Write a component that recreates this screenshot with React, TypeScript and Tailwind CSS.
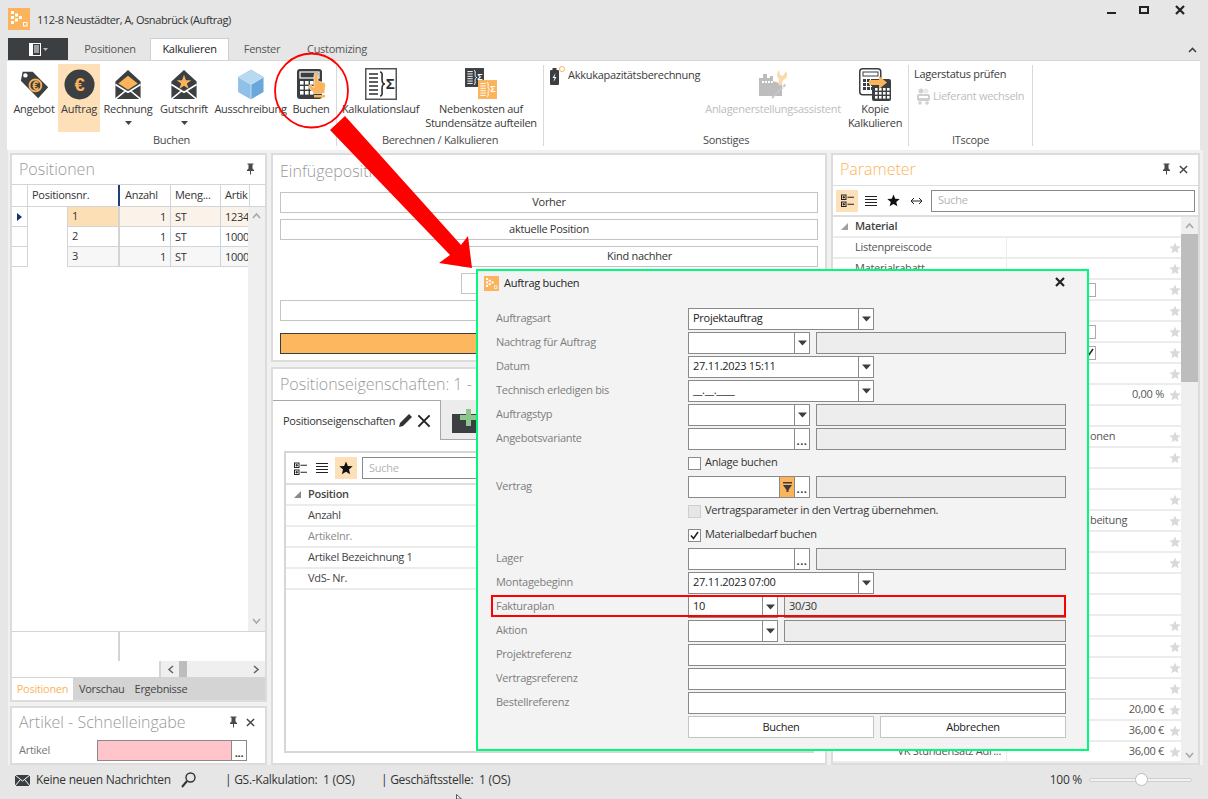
import React from "react";

const Star = ({ c = "#d9d9d9", s = 12 }: { c?: string; s?: number }) => (
  <svg width={s} height={s} viewBox="0 0 24 24" className="shrink-0">
    <polygon fill={c} points="12,1 15.2,8.6 23.4,9.2 17.1,14.6 19.1,22.6 12,18.3 4.9,22.6 6.9,14.6 0.6,9.2 8.8,8.6" />
  </svg>
);
const Caret = () => (
  <svg width="9" height="6" viewBox="0 0 9 6"><polygon points="0,0.5 9,0.5 4.5,5.5" fill="#3c3c3c" /></svg>
);
const Pin = () => (
  <svg width="9" height="12" viewBox="0 0 9 12" className="shrink-0">
    <path d="M1.5 0.5h6v1h-1v4l1.5 1.5v1h-3v3.5h-1v-3.5h-3v-1l1.5-1.5v-4h-1z" fill="#4a4a4a" />
  </svg>
);
const Cross = ({ s = 9, w = 1.6, c = "#444" }: { s?: number; w?: number; c?: string }) => (
  <svg width={s} height={s} viewBox="0 0 10 10" className="shrink-0">
    <path d="M1 1l8 8M9 1l-8 8" stroke={c} strokeWidth={w} fill="none" />
  </svg>
);
const TreeIcon = () => (
  <svg width="13" height="13" viewBox="0 0 13 13">
    <rect x="0.5" y="1" width="4.500" height="4.500" fill="none" stroke="#222" />
    <rect x="0.5" y="8" width="4.500" height="4.500" fill="none" stroke="#222" />
    <path d="M1.500 3.250h2.500M2.750 2v2.500M1.500 10.250h2.500M2.750 9v2.500M6.500 3.250h6.500M6.500 10.250h6.500" stroke="#222" />
  </svg>
);
const LinesIcon = () => (
  <svg width="12" height="12" viewBox="0 0 12 12"><path d="M0 1.5h12M0 4.5h12M0 7.5h12M0 10.5h12" stroke="#222" /></svg>
);
const ScrollChevron = ({ d }: { d: "u" | "d" | "l" | "r" }) => {
  const p = { u: "M1 6l3.500-4 3.500 4", d: "M1 2l3.500 4 3.500-4", l: "M6 1l-4 3.500 4 3.500", r: "M2 1l4 3.500-4 3.500" }[d];
  const color = d === "u" || d === "d" ? "#a8a8a8" : "#666";
  return <svg width="9" height="9" viewBox="0 0 9 9"><path d={p} fill="none" stroke={color} strokeWidth="1.600" /></svg>;
};

const LogoMark = ({ s }: { s: number }) => (
  <svg width={s} height={s} viewBox="0 0 22 22" className="shrink-0">
    <rect width="22" height="22" fill="#fbb45c" />
    <g fill="#fff">
      <rect x="3" y="3" width="3" height="3" /><rect x="3" y="8" width="3" height="3" /><rect x="3" y="13" width="3" height="3" />
      <rect x="7" y="5.5" width="3" height="3" /><rect x="7" y="10.5" width="3" height="3" /><rect x="11" y="8" width="3" height="3" />
    </g>
    <rect x="15.5" y="14.5" width="3.5" height="3.5" fill="none" stroke="#fff" />
  </svg>
);
const DARK = "#3b3f41";
const ORANGE = "#fbb45c";

const IconAngebot = () => (
  <svg width="31" height="31" viewBox="0 0 34 34">
    <path d="M4 3h11l17 17-11 12L2 13z" fill={DARK} />
    <circle cx="7" cy="7" r="2.400" fill="#fff" />
    <circle cx="18" cy="18" r="6.500" fill="none" stroke={ORANGE} strokeWidth="2" />
    <text x="18" y="22.500" textAnchor="middle" fontSize="13" fontWeight="700" fill={ORANGE} fontFamily="Liberation Sans, sans-serif">€</text>
  </svg>
);
const IconAuftrag = () => (
  <svg width="31" height="31" viewBox="0 0 32 32">
    <circle cx="16" cy="16" r="15.500" fill={DARK} />
    <text x="16" y="22.500" textAnchor="middle" fontSize="19" fontWeight="700" fill={ORANGE} fontFamily="Liberation Sans, sans-serif">€</text>
  </svg>
);
const Envelope = ({ star }: { star?: boolean }) => (
  <svg width="28" height="31" viewBox="0 0 28 32">
    <path d="M14 1L27 13v18H1V13z" fill={DARK} />
    <path d="M1 16l13 8 13-8M1 31l11-9M27 31l-11-9" fill="none" stroke="#fff" strokeWidth="1.600" />
    {star ? (
      <polygon fill={ORANGE} points="14,6 16,11.5 21.5,11.5 17,15 18.7,20.5 14,17.3 9.3,20.5 11,15 6.5,11.5 12,11.5" />
    ) : (
      <path d="M14 7l10 8-10 6.500L4 15z" fill={ORANGE} />
    )}
  </svg>
);
const IconCube = () => (
  <svg width="26" height="31" viewBox="0 0 28 33">
    <path d="M14 0.500L27.500 8.500v16L14 32.500.5 24.500v-16z" fill="#6aa7da" />
    <path d="M14 0.500L27.500 8.500 14 16.500.5 8.500z" fill="#b9d9f1" />
    <path d="M14 16.500v16L.5 24.500v-16z" fill="#8fc0e7" />
    <path d="M14 16.500L27.500 8.500M14 16.500L.5 8.500M14 16.500v16" stroke="#d8ebf8" strokeWidth="0.800" />
  </svg>
);
const IconBuchen = () => (
  <svg width="29" height="32" viewBox="0 0 29 32">
    <rect x="0" y="1" width="25" height="30" rx="3" fill={DARK} />
    <rect x="3" y="4" width="19" height="6" fill="none" stroke="#fff" strokeWidth="1.200" />
    <g fill="#fff">
      {[13, 18, 23].map((y) => [3, 8, 13].map((x) => <rect key={`${x}${y}`} x={x} y={y} width="3.600" height="3.600" />))}
    </g>
    <path d="M17 7a2 2 0 014 0v6l5.500 1.500c1 .3 2 1 2 2l-1 9H17l-6-7 2-2 4 3z" fill={ORANGE} stroke="#fff" strokeWidth="0.600" />
    <rect x="17" y="27" width="11" height="2.500" fill={ORANGE} />
  </svg>
);
const SigmaBox = ({ s, fill, fg, border }: { s: number; fill: string; fg: string; border?: string }) => (
  <svg width={s} height={s} viewBox="0 0 32 32" className="shrink-0">
    <rect x="0.750" y="0.750" width="30.500" height="30.500" fill={fill} stroke={border ?? fill} strokeWidth="1.500" />
    <path d="M4 6h9M4 10h9M4 14h9M4 18h9M4 22h9M4 26h9" stroke={fg} strokeWidth="1.600" />
    <path d="M15 4c3 0 2 4 2 7s1 5 3 5c-2 0-3 2-3 5s1 7-2 7" fill="none" stroke={fg} strokeWidth="1.600" />
    <text x="25" y="21" textAnchor="middle" fontSize="15" fontWeight="700" fill={fg} fontFamily="Liberation Sans, sans-serif">Σ</text>
  </svg>
);
const IconNebenkosten = () => (
  <span className="relative block w-[32px] h-[32px]">
    <span className="absolute left-0 top-0"><SigmaBox s={19} fill={DARK} fg="#fff" /></span>
    <span className="absolute left-[13px] top-[12px]"><SigmaBox s={19} fill={ORANGE} fg="#fff" /></span>
  </span>
);
const IconAnlage = () => (
  <svg width="30" height="32" viewBox="0 0 30 32">
    <path d="M1 10h4V6h4v4h3V8h3v5l9 3v12H1z" fill="#bdbdbd" />
    <path d="M4 14h12" stroke="#fff" strokeWidth="2" strokeDasharray="2 1" />
    <path d="M21 2l1 5 3 1 3-5c2 4 1 8-3 9l-2 6-3-2 1-5c-3-2-2-7 0-9z" fill="#fad9ab" />
    <path d="M14 30l14-14" stroke="#c9c9c9" strokeWidth="2" strokeDasharray="3 1" />
  </svg>
);
const IconKopie = () => (
  <svg width="32" height="33" viewBox="0 0 32 33">
    <rect x="0.750" y="0.750" width="21" height="26" rx="3" fill="#fff" stroke={DARK} strokeWidth="1.500" />
    <rect x="4" y="4" width="15" height="4" fill="none" stroke={DARK} />
    <g fill={DARK}>
      {[11, 15, 19].map((y) => [4, 8, 12].map((x) => <rect key={`${x}${y}`} x={x} y={y} width="3" height="3" />))}
    </g>
    <rect x="13" y="11" width="19" height="22" rx="2" fill={DARK} />
    <g fill="#fff">
      {[20, 24, 28].map((y) => [16, 20, 24, 28].map((x) => <rect key={`${x}${y}`} x={x} y={y} width="2.600" height="2.600" />))}
    </g>
    <path d="M10 12h10V8l8 6.500-8 6.500v-4H10z" fill={ORANGE} />
  </svg>
);
const IconBattery = () => (
  <svg width="16" height="19" viewBox="0 0 16 19" className="shrink-0">
    <rect x="1" y="4" width="9" height="15" rx="1" fill={DARK} />
    <rect x="3.500" y="2" width="4" height="2" fill={DARK} />
    <path d="M6.500 7L3.500 12h2L4.500 16l3-5h-2z" fill="#fff" />
    <circle cx="13" cy="3" r="2.500" fill="none" stroke={ORANGE} />
  </svg>
);
const IconLieferant = () => (
  <svg width="15" height="17" viewBox="0 0 15 17" className="shrink-0">
    <circle cx="5" cy="3" r="2.500" fill="#d0d0d0" /><circle cx="10" cy="3" r="2.500" fill="#e8e8e8" />
    <rect x="1" y="6" width="13" height="7" rx="2" fill="#cfcfcf" /><rect x="3" y="8" width="9" height="2" fill="#fff" />
    <circle cx="4" cy="15" r="1.800" fill="#d0d0d0" /><circle cx="11" cy="15" r="1.800" fill="#d0d0d0" />
  </svg>
);

const RibbonBtn = ({ w, label, icon, caret, active, muted }: { w: string; label: React.ReactNode; icon: React.ReactNode; caret?: boolean; active?: boolean; muted?: boolean }) => (
  <div className={`${w} h-[68px] shrink-0 flex flex-col items-center ${active ? "bg-[#fde0b8]" : ""}`}>
    <div className="h-[38px] w-full flex items-center justify-center pt-[2px]">{icon}</div>
    <div className={`text-center leading-[14px] whitespace-nowrap ${muted ? "text-[#bdbdbd]" : "text-[#3a3a3a]"}`}>{label}</div>
    {caret && <div className="mt-[5px] flex"><svg width="7" height="4" viewBox="0 0 7 4"><polygon points="0,0 7,0 3.500,4" fill="#444" /></svg></div>}
  </div>
);
const RibbonGroup = ({ w, label, children, pad }: { w: string; label: string; children: React.ReactNode; pad?: string }) => (
  <div className={`${w} shrink-0 flex`}>
    <div className="flex-1 min-w-0 flex flex-col">
      <div className={`h-[68px] shrink-0 mt-[3px] flex ${pad ?? ""}`}>{children}</div>
      <div className="h-[16px] shrink-0 flex items-center justify-center text-[#4a4a4a]">{label}</div>
    </div>
    <div className="w-px bg-[#d9d9d9] mt-[4px]" />
  </div>
);

const Panel = ({ className, children }: { className: string; children: React.ReactNode }) => (
  <div className={`bg-white border-2 border-[#dcdcdc] flex flex-col overflow-hidden ${className}`}>{children}</div>
);
const PanelTitle = ({ text, orange, h, controls }: { text: string; orange?: boolean; h: string; controls?: "pin" | "both" }) => (
  <div className={`${h} shrink-0 flex items-center pl-[7px] pr-[9px]`}>
    <span className={`text-[16px] font-light tracking-[0px] leading-none whitespace-nowrap flex-1 ${orange ? "text-[#fbb45c]" : "text-[#999]"}`}>{text}</span>
    {controls && <div className="flex items-center gap-[8px] mr-[1px]"><Pin />{controls === "both" && <Cross />}</div>}
  </div>
);

const Box = ({ w, grey, children, flex }: { w?: string; grey?: boolean; children?: React.ReactNode; flex?: boolean }) => (
  <div className={`${w ?? ""} ${flex ? "flex-1" : "shrink-0"} h-[22px] border border-[#8a8a8a] ${grey ? "bg-[#ededed]" : "bg-white"} flex items-center overflow-hidden`}>{children}</div>
);
const Combo = ({ w, text, dots, filter }: { w: string; text?: string; dots?: boolean; filter?: boolean }) => (
  <Box w={w}>
    <span className="flex-1 pl-[4px] pb-[1px] text-[#222] whitespace-nowrap">{text}</span>
    {filter && (
      <span className="w-[15px] h-full bg-[#fbb45c] border-l border-[#8a8a8a] flex items-center justify-center">
        <svg width="9" height="10" viewBox="0 0 9 10"><path d="M0 0h9v1.500H0zM0 3h9L5.500 8v2h-2V8z" fill="#3c3c3c" /></svg>
      </span>
    )}
    <span className="w-[15px] h-full border-l border-[#8a8a8a] flex items-center justify-center">
      {dots ? <span className="text-[#333] leading-none tracking-[0.5px] pt-[3px] font-bold">...</span> : <Caret />}
    </span>
  </Box>
);
const Row = ({ label, children }: { label?: string; children: React.ReactNode }) => (
  <div className="h-[22px] flex items-center">
    <span className="w-[192px] shrink-0 pb-[2px] text-[#7d7d7d] whitespace-nowrap">{label}</span>
    <div className="w-[378px] flex gap-[6px] items-center">{children}</div>
  </div>
);
const Check = ({ checked, disabled, label }: { checked?: boolean; disabled?: boolean; label: string }) => (
  <div className="flex items-center gap-[4px]">
    <span className={`w-[13px] h-[13px] border flex items-center justify-center ${disabled ? "bg-[#e6e6e6] border-[#cfcfcf]" : "bg-white border-[#8a8a8a]"}`}>
      {checked && <svg width="9" height="9" viewBox="0 0 9 9"><path d="M1 4.500l2.500 3L8 1" fill="none" stroke="#222" strokeWidth="1.500" /></svg>}
    </span>
    <span className="text-[#333] whitespace-nowrap pb-[2px]">{label}</span>
  </div>
);

const paramRows: { name?: string; star: boolean; value?: string; left?: string; check?: boolean; checked?: boolean; nameRight?: boolean }[] = [
  { name: "Listenpreiscode", star: true },
  { name: "Materialrabatt", star: true },
  { star: true, check: true },
  { star: true },
  { star: true, check: true },
  { star: true, check: true, checked: true },
  { star: true },
  { star: true, value: "0,00 %" },
  { star: false },
  { star: true, left: "onen" },
  { star: true },
  { star: false },
  { star: true },
  { star: true, left: "beitung" },
  { star: true },
  { star: true },
  { star: false },
  { star: false },
  { star: true },
  { star: true },
  { star: true },
  { star: true },
  { star: true, value: "20,00 €" },
  { star: true, value: "36,00 €" },
  { star: true, value: "36,00 €", name: "VK Stundensatz Adr...", nameRight: true },
];

const gridRows = [
  { n: "1", art: "1234", bg: "bg-[#fbf3e9]", cell: "bg-[#fddfb5]", tri: true },
  { n: "2", art: "1000", bg: "bg-white", cell: "bg-white" },
  { n: "3", art: "1000", bg: "bg-[#f7f7f7]", cell: "bg-[#f7f7f7]" },
];

export default function App() {
  return (
    <div className="relative w-[1208px] h-[799px] overflow-hidden bg-[#e6e6e6] flex flex-col text-[11px] tracking-[-0.28px] text-[#333] font-['Open_Sans','Noto_Sans',sans-serif]">
      {/* Title bar */}
      <div className="h-[38px] shrink-0 flex items-center pl-[8px]">
        <LogoMark s={22} />
        <span className="ml-[7px] pt-[2px] tracking-[-0.42px] text-[#333] whitespace-nowrap">112-8 Neustädter, A, Osnabrück (Auftrag)</span>
        <div className="ml-auto flex items-center mr-[23px] mb-[18px]">
          <span className="w-[9px] h-[2px] bg-[#222] mt-[5px]" />
          <span className="ml-[23px] w-[10px] h-[8px] border-2 border-[#222]" />
          <span className="ml-[26px]"><Cross s={10} w={2.200} c="#222" /></span>
        </div>
      </div>
      {/* Tabs */}
      <div className="h-[22px] shrink-0 flex items-stretch pl-[8px] relative">
        <div className="w-[60px] bg-[#3b3f41] flex items-center justify-center gap-[2px]">
          <svg width="12" height="13" viewBox="0 0 12 13"><rect x="0" y="0" width="3" height="13" fill="#fff" /><rect x="3.500" y="0.500" width="8" height="12" fill="none" stroke="#fff" /><path d="M5 3h5M5 5h5M5 7h5M5 9h5" stroke="#fff" /></svg>
          <svg width="5" height="3" viewBox="0 0 5 3"><polygon points="0,0 5,0 2.500,3" fill="#bbb" /></svg>
        </div>
        <div className="w-[82px] pl-[2px] flex items-center justify-center text-[#555]">Positionen</div>
        <div className="w-[79px] flex items-center justify-center bg-white border border-b-0 border-[#cfcfcf] text-[#222]">Kalkulieren</div>
        <div className="w-[66px] flex items-center justify-center text-[#555]">Fenster</div>
        <div className="w-[84px] flex items-center justify-center text-[#555]">Customizing</div>
        <div className="ml-auto mr-[11px] flex items-center pt-[2px]"><svg width="9" height="6" viewBox="0 0 9 6"><path d="M1 5l3.500-3.500L8 5" fill="none" stroke="#444" strokeWidth="1.600" /></svg></div>
      </div>
      {/* Ribbon */}
      <div className="h-[90px] shrink-0 ml-[7px] w-[1193px] bg-white border-t border-[#d4d4d4] flex pb-[4px]">
        <RibbonGroup w="w-[330px]" label="Buchen" pad="pl-[3px]">
          <RibbonBtn w="w-[48px]" label="Angebot" icon={<IconAngebot />} />
          <RibbonBtn w="w-[42px]" label="Auftrag" icon={<IconAuftrag />} active />
          <RibbonBtn w="w-[56px]" label="Rechnung" icon={<Envelope />} caret />
          <RibbonBtn w="w-[56px]" label="Gutschrift" icon={<Envelope star />} caret />
          <RibbonBtn w="w-[77px]" label="Ausschreibung" icon={<IconCube />} />
          <RibbonBtn w="w-[44px]" label="Buchen" icon={<IconBuchen />} />
        </RibbonGroup>
        <RibbonGroup w="w-[207px]" label="Berechnen / Kalkulieren" pad="pl-[5px]">
          <RibbonBtn w="w-[77px]" label="Kalkulationslauf" icon={<SigmaBox s={32} fill="#fff" fg="#2d2d2d" border="#555" />} />
          <RibbonBtn w="w-[124px]" label={<>Nebenkosten auf<br />Stundensätze aufteilen</>} icon={<IconNebenkosten />} />
        </RibbonGroup>
        <RibbonGroup w="w-[365px]" label="Sonstiges" pad="pl-[5px]">
          <div className="w-[154px] flex items-start pt-[2px] gap-[3px]"><IconBattery /><span className="whitespace-nowrap text-[#3a3a3a] pt-[1px]">Akkukapazitätsberechnung</span></div>
          <RibbonBtn w="w-[140px]" label="Anlagenerstellungsassistent" icon={<IconAnlage />} muted />
          <RibbonBtn w="w-[64px]" label={<>Kopie<br />Kalkulieren</>} icon={<IconKopie />} />
        </RibbonGroup>
        <RibbonGroup w="w-[124px]" label="ITscope" pad="pl-[5px]">
          <div className="flex flex-col gap-[7px] pt-[1px]">
            <span className="h-[16px] leading-[18px] whitespace-nowrap text-[#3a3a3a]">Lagerstatus prüfen</span>
            <span className="h-[16px] flex items-center gap-[2px] whitespace-nowrap text-[#bdbdbd] pl-[2px]"><IconLieferant />Lieferant wechseln</span>
          </div>
        </RibbonGroup>
      </div>

      {/* Panels */}
      <div className="h-[615px] shrink-0 ml-[8px] w-[1195px] bg-[#f1f1f1] pl-[2px] pt-[3px] flex gap-[4px]">
        {/* Left */}
        <div className="w-[257px] shrink-0 flex flex-col gap-[4px]">
          <Panel className="h-[549px]">
            <PanelTitle text="Positionen" h="h-[29px] pb-[2px]" controls="pin" />
            <div className="flex-1 flex flex-col min-h-0 border-t border-[#d4d4d4]">
              <div className="h-[22px] shrink-0 flex border-b border-[#d4d4d4] text-[#333]">
                <div className="w-[16px] border-r border-[#d4d4d4]" />
                <div className="w-[92px] pl-[4px] flex items-center border-r-2 border-[#1d3f7a]">Positionsnr.</div>
                <div className="w-[51px] pl-[5px] flex items-center border-r border-[#d4d4d4]">Anzahl</div>
                <div className="w-[50px] pl-[4px] flex items-center border-r border-[#d4d4d4]">Meng...</div>
                <div className="w-[28px] pl-[4px] flex items-center overflow-hidden">Artik</div>
                <div className="flex-1 border-l border-[#d4d4d4]" />
              </div>
              <div className="h-[425px] shrink-0 flex border-b border-[#d4d4d4]">
                <div className="flex-1 min-w-0">
                  {gridRows.map((r) => (
                    <div key={r.n} className="h-[20px] flex">
                      <div className="w-[16px] shrink-0 border-r border-b border-[#d4d4d4] flex items-center justify-center">
                        {r.tri && <svg width="5" height="8" viewBox="0 0 5 8"><polygon points="0,0 5,4 0,8" fill="#14336b" /></svg>}
                      </div>
                      <div className="w-[39px] shrink-0" />
                      <div className={`w-[53px] shrink-0 border-b border-l border-[#d4d4d4] flex items-center pl-[4px] border-r-2 ${r.cell}`}>{r.n}</div>
                      <div className={`flex-1 min-w-0 flex border-b border-[#d4d4d4] ${r.bg}`}>
                        <div className="w-[51px] shrink-0 text-right pr-[4px] leading-[20px] border-r border-[#c5d5e5]">1</div>
                        <div className="w-[50px] shrink-0 pl-[4px] leading-[20px] border-r border-[#c5d5e5]">ST</div>
                        <div className="pl-[4px] leading-[20px] overflow-hidden whitespace-nowrap flex-1">{r.art}</div>
                      </div>
                    </div>
                  ))}
                </div>
                <div className="w-[17px] shrink-0 bg-[#efefef] flex flex-col items-center justify-between py-[5px]">
                  <ScrollChevron d="u" /><ScrollChevron d="d" />
                </div>
              </div>
              <div className="h-[29px] shrink-0 flex">
                <div className="w-[108px] border-r-2 border-[#d4d4d4]" />
              </div>
              <div className="h-[17px] shrink-0 flex justify-end border-b border-[#d4d4d4]">
                <div className="w-[106px] bg-[#efefef] border-l-2 border-[#d4d4d4] flex items-center pl-[6px] pr-[4px]">
                  <ScrollChevron d="l" />
                  <span className="ml-[3px] w-[8px] h-full bg-[#bdbdbd]" />
                  <span className="ml-auto"><ScrollChevron d="r" /></span>
                </div>
              </div>
              <div className="flex-1 flex bg-[#d4d4d4] items-stretch text-[#444]">
                <div className="w-[61px] bg-white flex items-center justify-center text-[#fbb45c]">Positionen</div>
                <div className="pl-[6px] flex items-center">Vorschau</div>
                <div className="pl-[10px] flex items-center">Ergebnisse</div>
              </div>
            </div>
          </Panel>
          <Panel className="h-[59px]">
            <PanelTitle text="Artikel - Schnelleingabe" h="h-[32px] pb-[4px]" controls="both" />
            <div className="flex items-center pl-[7px] text-[#777]">
              <span className="w-[78px]">Artikel</span>
              <div className="w-[150px] h-[21px] border border-[#8a8a8a] flex">
                <span className="flex-1 bg-[#ffc5cb]" />
                <span className="w-[15px] border-l border-[#8a8a8a] bg-white text-[#333] font-bold leading-none flex items-end justify-center pb-[2px]">...</span>
              </div>
            </div>
            <div className="ml-[85px] w-[150px] h-px bg-[#8a8a8a] mt-[2px]" />
          </Panel>
        </div>

        {/* Middle */}
        <div className="w-[556px] shrink-0 flex flex-col gap-[5px]">
          <Panel className="h-[209px]">
            <PanelTitle text="Einfügeposition" h="h-[37px] pb-[6px]" />
            <div className="pl-[7px] pr-[7px] flex flex-col gap-[6px] text-[#333]">
              {["Vorher", "aktuelle Position"].map((t) => (
                <div key={t} className="h-[21px] border border-[#c4c4c4] flex items-center justify-center">{t}</div>
              ))}
              <div className="ml-[181px] h-[21px] border border-[#c4c4c4] flex items-center justify-center">Kind nachher</div>
              <div className="ml-[181px] h-[21px] border border-[#c4c4c4]" />
              <div className="h-[21px] border border-[#c4c4c4]" />
              <div className="mt-[6px] h-[21px] bg-[#fdb75e] border border-[#3c3c3c]" />
            </div>
          </Panel>
          <Panel className="h-[398px]">
            <PanelTitle text="Positionseigenschaften: 1 - " h="h-[31px] pb-[1px]" />
            <div className="flex h-[40px] shrink-0 ml-[-1px]">
              <div className="w-[169px] border-t border-r border-l border-[#a8a8a8] flex items-center pl-[10px] gap-[3px] text-[#333]">
                <span className="whitespace-nowrap pt-[1px]">Positionseigenschaften</span>
                <svg width="16" height="15" viewBox="0 0 16 15" className="shrink-0"><path d="M1 14l1-4L11 1l3 3-9 9z" fill="#333" /></svg>
                <Cross s={14} w={1.400} c="#222" />
              </div>
              <div className="flex-1 bg-[#ececec] border-b border-[#a8a8a8] flex items-center pl-[11px]">
                <svg width="26" height="26" viewBox="0 0 26 26"><rect x="0" y="7" width="26" height="19" fill="#3b3f41" /><path d="M14 2h5v6h6v5h-6v6h-5v-6H8V8h6z" fill="#8cc68c" /></svg>
              </div>
            </div>
            <div className="flex-1 mx-[11px] mt-[11px] mb-[10px] border-2 border-[#d6d6d6] border-r-0 flex flex-col">
              <div className="h-[32px] shrink-0 flex items-center pl-[8px] gap-[9px] border-b-2 border-[#dedede]">
                <TreeIcon /><LinesIcon />
                <span className="-ml-[2px] w-[22px] h-[22px] bg-[#fde0b8] flex items-center justify-center"><Star c="#111" s={14} /></span>
                <div className="flex-1 h-[22px] border border-[#8a8a8a] flex items-center pl-[6px] text-[#b4b4b4] -ml-[4px]">Suche</div>
              </div>
              {[["Position", "font-semibold text-[#444]"], ["Anzahl", "text-[#444]"], ["Artikelnr.", "text-[#8a8a8a]"], ["Artikel Bezeichnung 1", "text-[#444]"], ["VdS- Nr.", "text-[#444]"]].map(([t, c], i) => (
                <div key={t} className={`h-[21px] shrink-0 flex items-center border-b-2 border-[#ececec] pl-[8px] ${c}`}>
                  <span className="w-[14px] shrink-0">
                    {i === 0 && <svg width="7" height="7" viewBox="0 0 7 7"><polygon points="7,0 7,7 0,7" fill="#8a8a8a" /></svg>}
                  </span>
                  {t}
                </div>
              ))}
            </div>
          </Panel>
        </div>

        {/* Right */}
        <Panel className="w-[369px] shrink-0 h-[612px]">
          <PanelTitle text="Parameter" orange h="h-[30px] pb-[2px]" controls="both" />
          <div className="h-[32px] shrink-0 flex items-center pl-[3px] border-t border-b-2 border-[#dedede]">
            <span className="w-[22px] h-[22px] bg-[#fde0b8] flex items-center justify-center"><TreeIcon /></span>
            <span className="w-[23px] flex justify-center ml-[1px]"><LinesIcon /></span>
            <span className="w-[23px] flex justify-center"><Star c="#111" s={13} /></span>
            <span className="w-[23px] flex justify-center">
              <svg width="13" height="8" viewBox="0 0 13 8"><path d="M1 4h11M4 1L1 4l3 3M9 1l3 3-3 3" fill="none" stroke="#222" /></svg>
            </span>
            <div className="ml-[3px] w-[264px] h-[22px] border border-[#8a8a8a] flex items-center pl-[6px] text-[#b4b4b4]">Suche</div>
          </div>
          <div className="flex-1 min-h-0 flex">
            <div className="flex-1 min-w-0">
              <div className="h-[21px] flex items-center pl-[8px] border-b-2 border-[#ececec] font-semibold text-[#444]">
                <span className="w-[14px]"><svg width="7" height="7" viewBox="0 0 7 7"><polygon points="7,0 7,7 0,7" fill="#a0a0a0" /></svg></span>
                Material
              </div>
              {paramRows.map((r, i) => (
                <div key={i} className="h-[21px] flex border-b-2 border-[#ececec] text-[#555]">
                  <div className={`w-[174px] shrink-0 flex items-center border-r border-[#ececec] whitespace-nowrap ${r.nameRight ? "justify-end pr-[5px]" : "pl-[22px]"}`}>{r.name}</div>
                  <div className="flex-1 flex items-center min-w-0 relative">
                    {r.left && <span className="absolute left-[83px]">{r.left}</span>}
                    {r.check && (
                      <span className="absolute left-[75px] w-[14px] h-[14px] bg-white border border-[#aaa] flex items-center justify-center">
                        {r.checked && <svg width="9" height="9" viewBox="0 0 9 9"><path d="M1 4.500l2.500 3L8 1" fill="none" stroke="#222" strokeWidth="1.500" /></svg>}
                      </span>
                    )}
                    <span className="ml-auto flex items-center gap-[5px]">
                      {r.value && <span>{r.value}</span>}
                      <span className="w-[12px] h-[12px]">{r.star && <Star />}</span>
                    </span>
                  </div>
                </div>
              ))}
            </div>
            <div className="w-[17px] shrink-0 bg-[#efefef] flex flex-col items-center pt-[5px] pb-[3px]">
              <ScrollChevron d="u" />
              <div className="w-full h-[148px] bg-[#bdbdbd] mt-[3px]" />
              <div className="mt-auto"><ScrollChevron d="d" /></div>
            </div>
          </div>
        </Panel>
      </div>

      {/* Status bar */}
      <div className="flex-1 flex items-center pl-[15px] pr-[16px] pb-[4px] text-[12px] text-[#333]">
        <svg width="15" height="11" viewBox="0 0 15 11" className="shrink-0"><rect width="15" height="11" fill={DARK} /><path d="M0 0l7.500 6L15 0M0 11l5-6M15 11l-5-6" fill="none" stroke="#fff" /></svg>
        <span className="ml-[6px] w-[145px] whitespace-nowrap">Keine neuen Nachrichten</span>
        <svg width="15" height="16" viewBox="0 0 15 16" className="shrink-0"><circle cx="9.500" cy="5.500" r="4.500" fill="none" stroke="#333" strokeWidth="1.400" /><path d="M6 9l-5 6" stroke="#333" strokeWidth="2" /></svg>
        <span className="ml-[29px] w-[156px] whitespace-pre">| GS.-Kalkulation:  1 (OS)</span>
        <span className="whitespace-pre">| Geschäftsstelle:  1 (OS)</span>
        <span className="ml-auto mr-[7px]">100 %</span>
        <div className="relative w-[103px] h-[4px] border border-[#d0d0d0] rounded-full bg-[#f2f2f2]">
          <span className="absolute left-[45px] -top-[6px] w-[13px] h-[13px] rounded-full bg-white border border-[#bdbdbd]" />
        </div>
      </div>

      {/* Red annotations */}
      <svg className="absolute left-0 top-0 pointer-events-none" width="1208" height="799" viewBox="0 0 1208 799">
        <ellipse cx="311.500" cy="90.500" rx="36.500" ry="37" fill="none" stroke="#f00" strokeWidth="1.800" />
        <polygon fill="#f00" points="330,130 345,116 461,245 468,236 472,268 439,263 450,255" />
      </svg>

      {/* Dialog */}
      <div className="absolute left-[476px] top-[269px] w-[613px] h-[482px] bg-[#f3f3f3] border-2 border-[#00fa7d] flex flex-col">
        <div className="h-[37px] shrink-0 flex items-center pl-[6px] pr-[22px] pb-[13px] text-[#222]">
          <LogoMark s={15} />
          <span className="ml-[5px]">Auftrag buchen</span>
          <span className="ml-auto pb-[2px]"><Cross s={10} w={2.200} c="#222" /></span>
        </div>
        <div className="pl-[18px] flex flex-col gap-[2px]">
          <Row label="Auftragsart"><Combo w="w-[186px]" text="Projektauftrag" /></Row>
          <Row label="Nachtrag für Auftrag"><Combo w="w-[122px]" /><Box flex grey /></Row>
          <Row label="Datum"><Combo w="w-[186px]" text="27.11.2023 15:11" /></Row>
          <Row label="Technisch erledigen bis"><Combo w="w-[186px]" text="__.__.____" /></Row>
          <Row label="Auftragstyp"><Combo w="w-[122px]" /><Box flex grey /></Row>
          <Row label="Angebotsvariante"><Combo w="w-[122px]" dots /><Box flex grey /></Row>
          <Row><Check label="Anlage buchen" /></Row>
          <Row label="Vertrag"><Combo w="w-[122px]" dots filter /><Box flex grey /></Row>
          <Row><Check disabled label="Vertragsparameter in den Vertrag übernehmen." /></Row>
          <Row><Check checked label="Materialbedarf buchen" /></Row>
          <Row label="Lager"><Combo w="w-[122px]" dots /><Box flex grey /></Row>
          <Row label="Montagebeginn"><Combo w="w-[186px]" text="27.11.2023 07:00" /></Row>
          <Row label="Fakturaplan"><Combo w="w-[90px]" text="10" /><Box flex grey><span className="pl-[4px] pb-[2px] text-[#333]">30/30</span></Box></Row>
          <Row label="Aktion"><Combo w="w-[90px]" /><Box flex grey /></Row>
          <Row label="Projektreferenz"><Box flex /></Row>
          <Row label="Vertragsreferenz"><Box flex /></Row>
          <Row label="Bestellreferenz"><Box flex /></Row>
          <Row>
            <div className="flex-1 h-[22px] bg-white border border-[#c4c4c4] flex items-center justify-center text-[#222]">Buchen</div>
            <div className="flex-1 h-[22px] bg-white border border-[#c4c4c4] flex items-center justify-center text-[#222]">Abbrechen</div>
          </Row>
        </div>
      </div>
      {/* Fakturaplan highlight */}
      <div className="absolute left-[491px] top-[595px] w-[575px] h-[22px] border-2 border-[#f00] pointer-events-none" />
      {/* Mouse pointer */}
      <svg className="absolute left-[456px] top-[794px]" width="8" height="6" viewBox="0 0 8 6"><path d="M0.500 0.500l5 4.500H0.500z" fill="#fff" stroke="#333" strokeWidth="0.800" /></svg>
    </div>
  );
}
